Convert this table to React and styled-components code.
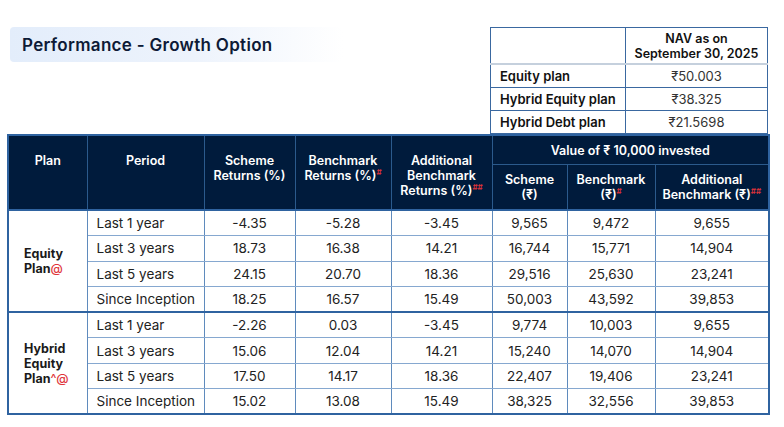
import React from "react";
import styled, { createGlobalStyle } from "styled-components";

const GlobalStyle = createGlobalStyle`
  html, body {
    margin: 0;
    padding: 0;
    background: #ffffff;
    font-family: Inter, "Noto Sans", "Liberation Sans", sans-serif;
    color: #1f1f1f;
  }
`;

const Page = styled.div`
  width: 784px;
  height: 427px;
  padding: 27px 16px 0 7px;
  box-sizing: border-box;
`;

const TopRow = styled.div`
  display: flex;
  justify-content: space-between;
  align-items: flex-start;
`;

const TitleBox = styled.div`
  margin-left: 3px;
  width: 333px;
  height: 35px;
  display: flex;
  align-items: center;
  padding-left: 12px;
  box-sizing: border-box;
  border-radius: 4px;
  background: linear-gradient(90deg, #e3edfb 0%, #edf3fc 55%, #ffffff 100%);
  font-size: 17px;
  font-weight: 600;
  color: #0d1a36;
  letter-spacing: 0.3px;
`;

const NavTable = styled.table`
  width: 277px;
  border-collapse: collapse;
  table-layout: fixed;
  font-size: 13px;
  td {
    border: 1px solid #3a68a0;
    height: 22px;
    padding: 0 9px;
    white-space: nowrap;
  }
`;

const NavHead = styled.td`
  && {
    height: 35px;
    padding: 0;
    text-align: center;
    font-weight: 600;
    font-size: 12.5px;
    line-height: 15px;
    border-bottom: 2px solid #c5d0dd;
    color: #111;
  }
`;

const NavLabel = styled.td`
  font-weight: 600;
  color: #111;
`;

const NavValue = styled.td`
  text-align: center;
  color: #333;
`;

const Perf = styled.table`
  width: 761px;
  border-collapse: collapse;
  table-layout: fixed;
  border: 2px solid #2f63a0;
  font-size: 12.5px;
`;

const Th = styled.th`
  background: #001b3c;
  color: #ffffff;
  font-weight: 600;
  line-height: 15px;
  border: 1px solid #2b5a8c;
  text-align: center;
  vertical-align: ${(p) => (p.$top ? "top" : "middle")};
  padding: ${(p) => (p.$top ? "17px 2px 0" : "0 2px")};
  height: ${(p) => p.$h || "auto"};
`;

const Sup = styled.sup`
  color: #e0343a;
  font-size: 8px;
  line-height: 0;
`;

const Td = styled.td`
  height: 24.3px;
  padding: 0;
  text-align: center;
  font-size: 13.5px;
  color: #222;
  border: 1px solid #86a8d0;
  border-top: ${(p) => (p.$groupTop ? "2px solid #2f63a0" : "1px solid #4d79ad")};
  border-right: 1px solid #5f8bbd;
  white-space: nowrap;
`;

const PeriodTd = styled(Td)`
  text-align: left;
  padding-left: 9px;
`;

const PlanTd = styled.td`
  font-weight: 700;
  font-size: 12.5px;
  line-height: 15px;
  color: #1a1a1a;
  padding-left: 15px;
  border: 1px solid #5f8bbd;
  border-top: 2px solid #2f63a0;
`;

const Red = styled.span`
  color: #e0343a;
  font-weight: 500;
`;

const navRows = [
  ["Equity plan", "₹50.003"],
  ["Hybrid Equity plan", "₹38.325"],
  ["Hybrid Debt plan", "₹21.5698"],
];

const groups = [
  {
    plan: (
      <>
        Equity
        <br />
        Plan<Red>@</Red>
      </>
    ),
    rows: [
      ["Last 1 year", "-4.35", "-5.28", "-3.45", "9,565", "9,472", "9,655"],
      ["Last 3 years", "18.73", "16.38", "14.21", "16,744", "15,771", "14,904"],
      ["Last 5 years", "24.15", "20.70", "18.36", "29,516", "25,630", "23,241"],
      ["Since Inception", "18.25", "16.57", "15.49", "50,003", "43,592", "39,853"],
    ],
  },
  {
    plan: (
      <>
        Hybrid
        <br />
        Equity
        <br />
        Plan<Red>^@</Red>
      </>
    ),
    rows: [
      ["Last 1 year", "-2.26", "0.03", "-3.45", "9,774", "10,003", "9,655"],
      ["Last 3 years", "15.06", "12.04", "14.21", "15,240", "14,070", "14,904"],
      ["Last 5 years", "17.50", "14.17", "18.36", "22,407", "19,406", "23,241"],
      ["Since Inception", "15.02", "13.08", "15.49", "38,325", "32,556", "39,853"],
    ],
  },
];

const widths = [79, 117, 91, 96, 101, 75, 88, 114];

export default function App() {
  return (
    <Page>
      <GlobalStyle />
      <TopRow>
        <TitleBox>Performance - Growth Option</TitleBox>
        <NavTable>
          <colgroup>
            <col style={{ width: 135 }} />
            <col style={{ width: 142 }} />
          </colgroup>
          <tbody>
            <tr>
              <NavHead></NavHead>
              <NavHead>
                NAV as on
                <br />
                September 30, 2025
              </NavHead>
            </tr>
            {navRows.map(([label, value]) => (
              <tr key={label}>
                <NavLabel>{label}</NavLabel>
                <NavValue>{value}</NavValue>
              </tr>
            ))}
          </tbody>
        </NavTable>
      </TopRow>
      <Perf>
        <colgroup>
          {widths.map((w, i) => (
            <col key={i} style={{ width: w }} />
          ))}
        </colgroup>
        <thead>
          <tr>
            <Th rowSpan={2} $top>Plan</Th>
            <Th rowSpan={2} $top>Period</Th>
            <Th rowSpan={2} $top>
              Scheme
              <br />
              Returns (%)
            </Th>
            <Th rowSpan={2} $top>
              Benchmark
              <br />
              Returns (%)<Sup>#</Sup>
            </Th>
            <Th rowSpan={2} $top>
              Additional
              <br />
              Benchmark
              <br />
              Returns (%)<Sup>##</Sup>
            </Th>
            <Th colSpan={3} $h="28px">
              Value of ₹ 10,000 invested
            </Th>
          </tr>
          <tr>
            <Th $h="44px">
              Scheme
              <br />
              (₹)
            </Th>
            <Th>
              Benchmark
              <br />
              (₹)<Sup>#</Sup>
            </Th>
            <Th>
              Additional
              <br />
              Benchmark (₹)<Sup>##</Sup>
            </Th>
          </tr>
        </thead>
        <tbody>
          {groups.map((g, gi) =>
            g.rows.map((r, ri) => (
              <tr key={`${gi}-${ri}`}>
                {ri === 0 && <PlanTd rowSpan={4}>{g.plan}</PlanTd>}
                <PeriodTd $groupTop={ri === 0}>{r[0]}</PeriodTd>
                {r.slice(1).map((v, vi) => (
                  <Td key={vi} $groupTop={ri === 0}>
                    {v}
                  </Td>
                ))}
              </tr>
            ))
          )}
        </tbody>
      </Perf>
    </Page>
  );
}
